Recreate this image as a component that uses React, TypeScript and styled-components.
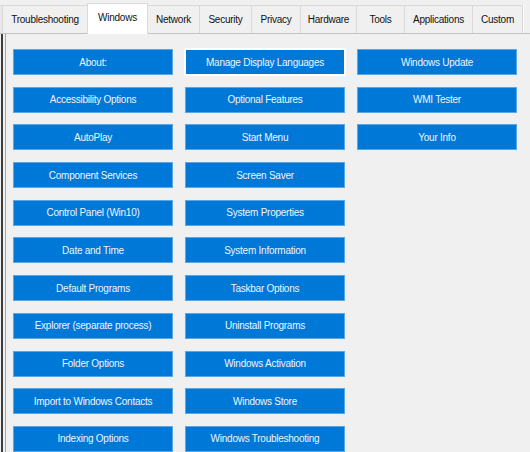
import React from 'react'
import styled, { createGlobalStyle } from 'styled-components'

const GlobalStyle = createGlobalStyle`
    html, body {
        margin: 0;
        padding: 0;
        background: #f0f0f0;
    }
    body {
        font-family: 'Liberation Sans', Arial, sans-serif;
    }
`

type TabDef = { label: string; width: number }

const tabs: TabDef[] = [
    { label: 'Troubleshooting', width: 85 },
    { label: 'Windows', width: 60 },
    { label: 'Network', width: 52 },
    { label: 'Security', width: 52 },
    { label: 'Privacy', width: 49 },
    { label: 'Hardware', width: 56 },
    { label: 'Tools', width: 48 },
    { label: 'Applications', width: 68 },
    { label: 'Custom', width: 50 },
]

const actions = [
    'About:',
    'Accessibility Options',
    'AutoPlay',
    'Component Services',
    'Control Panel (Win10)',
    'Date and Time',
    'Default Programs',
    'Explorer (separate process)',
    'Folder Options',
    'Import to Windows Contacts',
    'Indexing Options',
    'Manage Display Languages',
    'Optional Features',
    'Start Menu',
    'Screen Saver',
    'System Properties',
    'System Information',
    'Taskbar Options',
    'Uninstall Programs',
    'Windows Activation',
    'Windows Store',
    'Windows Troubleshooting',
    'Windows Update',
    'WMI Tester',
    'Your Info',
]

export default function App() {
    const selected = 'Windows'
    const focused = 'Manage Display Languages'

    return (
        <>
            <GlobalStyle />
            <Page>
                <TabStrip>
                    <CutTab />
                    {tabs.map(t => (
                        <Tab key={t.label} $width={t.width} $active={t.label === selected}>
                            {t.label}
                        </Tab>
                    ))}
                    <TabTail />
                </TabStrip>
                <Body>
                    <EdgeRule />
                    <Panel>
                        <ButtonGrid>
                            {actions.map(a => (
                                <ActionButton key={a} $focused={a === focused}>
                                    {a}
                                </ActionButton>
                            ))}
                        </ButtonGrid>
                    </Panel>
                </Body>
            </Page>
        </>
    )
}

const Page = styled.div`
    width: 530px;
    height: 452px;
    overflow: hidden;
    display: flex;
    flex-direction: column;
    background: #f0f0f0;
`

const TabStrip = styled.div`
    display: flex;
    align-items: flex-end;
    height: 33px;
    flex-shrink: 0;
    border-bottom: 1px solid #c4c4c4;
`

const CutTab = styled.div`
    width: 3px;
    height: 28px;
    box-sizing: border-box;
    border-top: 1px solid #d9d9d9;
    border-right: 1px solid #d9d9d9;
    background: #e8e8e8;
`

const Tab = styled.div<{ $width: number; $active: boolean }>`
    position: relative;
    box-sizing: border-box;
    width: ${p => p.$width + (p.$active ? 1 : 0)}px;
    height: ${p => (p.$active ? 31 : 28)}px;
    margin-bottom: ${p => (p.$active ? -1 : 0)}px;
    margin-left: ${p => (p.$active ? -1 : 0)}px;
    z-index: ${p => (p.$active ? 1 : 0)};
    display: flex;
    align-items: center;
    justify-content: center;
    padding-bottom: ${p => (p.$active ? 3 : 0)}px;
    background: ${p => (p.$active ? '#ffffff' : '#f0f0f0')};
    border: 1px solid #d9d9d9;
    border-bottom: none;
    border-left: ${p => (p.$active ? '1px solid #d9d9d9' : 'none')};
    font-size: 10px;
    letter-spacing: -0.25px;
    color: #111;
    white-space: nowrap;
`

const TabTail = styled.div`
    flex: 1;
    height: 28px;
    border-left: 1px solid #ffffff;
`

const Body = styled.div`
    flex: 1;
    display: flex;
    min-height: 0;
`

const EdgeRule = styled.div`
    width: 2px;
    margin-left: 1px;
    background: #3c3c3c;
`

const Panel = styled.div`
    flex: 1;
    margin-left: 2px;
    border-left: 1px solid #a8a8a8;
    padding: 15px 0 0 7px;
    background: #f0f0f0;
`

const ButtonGrid = styled.div`
    display: grid;
    grid-template-columns: repeat(3, 160px);
    grid-template-rows: repeat(11, 26px);
    grid-auto-flow: column;
    column-gap: 12px;
    row-gap: 11.7px;
`

const ActionButton = styled.div<{ $focused: boolean }>`
    box-sizing: border-box;
    display: flex;
    align-items: center;
    justify-content: center;
    background: #0078d7;
    border: 1px solid ${p => (p.$focused ? '#ffffff' : '#5aa7e6')};
    box-shadow: ${p => (p.$focused ? '0 0 0 1px #ffffff' : 'none')};
    color: #eef5fc;
    font-size: 10px;
    letter-spacing: -0.25px;
    white-space: nowrap;
`
